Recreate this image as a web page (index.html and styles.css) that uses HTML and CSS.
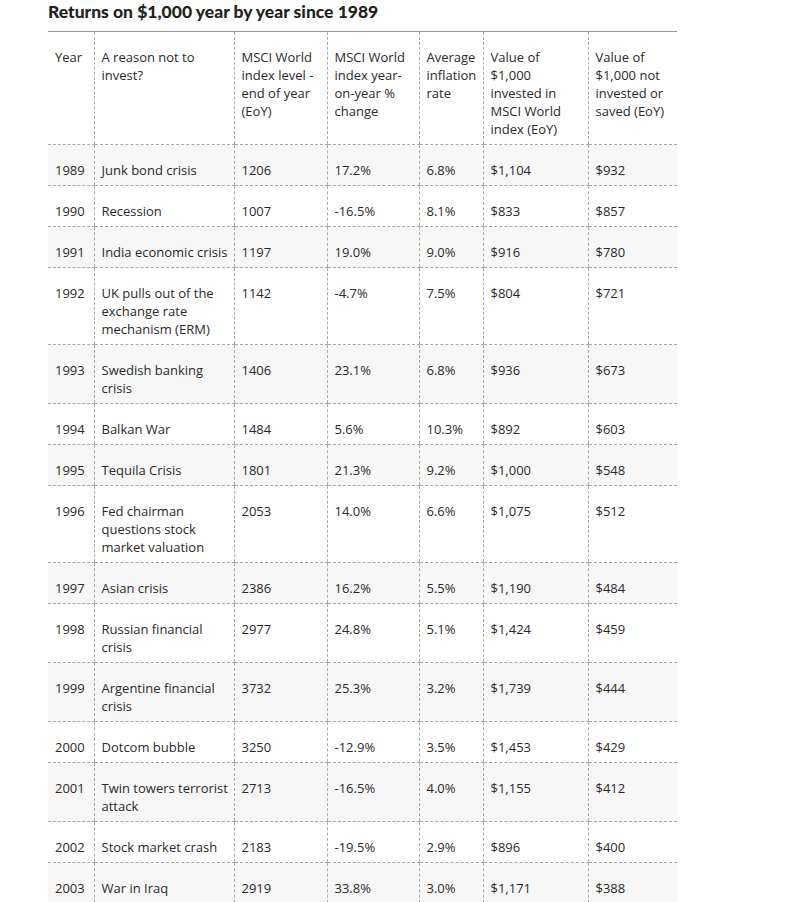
FILE: index.html
```html
<!DOCTYPE html>
<html>
<head>
<meta charset="utf-8">
<link rel="stylesheet" href="styles.css">
</head>
<body>
<div class="wrap">
<h2 class="title">Returns on $1,000 year by year since 1989</h2>
<table class="returns">
<colgroup>
<col class="c1"><col class="c2"><col class="c3"><col class="c4"><col class="c5"><col class="c6"><col class="c7">
</colgroup>
<thead>
<tr><th>Year</th><th>A reason not to invest?</th><th>MSCI World index level - end of year (EoY)</th><th>MSCI World index year-on-year % change</th><th>Average inflation rate</th><th>Value of $1,000 invested in MSCI World index (EoY)</th><th>Value of $1,000 not invested or saved (EoY)</th></tr>
</thead>
<tbody>
<tr><td>1989</td><td>Junk bond crisis</td><td>1206</td><td>17.2%</td><td>6.8%</td><td>$1,104</td><td>$932</td></tr>
<tr><td>1990</td><td>Recession</td><td>1007</td><td>-16.5%</td><td>8.1%</td><td>$833</td><td>$857</td></tr>
<tr><td>1991</td><td>India economic crisis</td><td>1197</td><td>19.0%</td><td>9.0%</td><td>$916</td><td>$780</td></tr>
<tr><td>1992</td><td>UK pulls out of the exchange rate mechanism (ERM)</td><td>1142</td><td>-4.7%</td><td>7.5%</td><td>$804</td><td>$721</td></tr>
<tr><td>1993</td><td>Swedish banking crisis</td><td>1406</td><td>23.1%</td><td>6.8%</td><td>$936</td><td>$673</td></tr>
<tr><td>1994</td><td>Balkan War</td><td>1484</td><td>5.6%</td><td>10.3%</td><td>$892</td><td>$603</td></tr>
<tr><td>1995</td><td>Tequila Crisis</td><td>1801</td><td>21.3%</td><td>9.2%</td><td>$1,000</td><td>$548</td></tr>
<tr><td>1996</td><td>Fed chairman questions stock market valuation</td><td>2053</td><td>14.0%</td><td>6.6%</td><td>$1,075</td><td>$512</td></tr>
<tr><td>1997</td><td>Asian crisis</td><td>2386</td><td>16.2%</td><td>5.5%</td><td>$1,190</td><td>$484</td></tr>
<tr><td>1998</td><td>Russian financial crisis</td><td>2977</td><td>24.8%</td><td>5.1%</td><td>$1,424</td><td>$459</td></tr>
<tr><td>1999</td><td>Argentine financial crisis</td><td>3732</td><td>25.3%</td><td>3.2%</td><td>$1,739</td><td>$444</td></tr>
<tr><td>2000</td><td>Dotcom bubble</td><td>3250</td><td>-12.9%</td><td>3.5%</td><td>$1,453</td><td>$429</td></tr>
<tr><td>2001</td><td>Twin towers terrorist attack</td><td>2713</td><td>-16.5%</td><td>4.0%</td><td>$1,155</td><td>$412</td></tr>
<tr><td>2002</td><td>Stock market crash</td><td>2183</td><td>-19.5%</td><td>2.9%</td><td>$896</td><td>$400</td></tr>
<tr><td>2003</td><td>War in Iraq</td><td>2919</td><td>33.8%</td><td>3.0%</td><td>$1,171</td><td>$388</td></tr>
</tbody>
</table>
</div>
</body>
</html>
```
FILE: styles.css
```css
html, body {
  margin: 0;
  padding: 0;
  background: #fff;
}
.wrap {
  padding: 0 0 0 48px;
}
.title {
  margin: 0;
  padding-top: 1px;
  height: 30px;
  font-family: "Lato", "Inter", sans-serif;
  font-weight: 900;
  font-size: 17.5px;
  line-height: 22px;
  color: #222;
}
.returns {
  border-collapse: collapse;
  table-layout: fixed;
  width: 629px;
  font-family: "Open Sans", "Noto Sans", sans-serif;
  font-size: 13px;
  line-height: 18px;
  color: #2a2a2a;
  border-top: 1px solid #9a9a9a;
}
.c1 { width: 46px; }
.c2 { width: 140px; }
.c3 { width: 93px; }
.c4 { width: 92px; }
.c5 { width: 64px; }
.c6 { width: 105px; }
.c7 { width: 89px; }
.returns th,
.returns td {
  text-align: left;
  vertical-align: top;
  font-weight: 400;
  padding: 16px 5px 6px 7px;
  border-left: 1px dashed #aaa;
  border-bottom: 1px dashed #aaa;
}
.returns th:first-child,
.returns td:first-child {
  border-left: none;
}
.returns tbody tr:nth-child(odd) td {
  background: #f7f7f7;
}
```
